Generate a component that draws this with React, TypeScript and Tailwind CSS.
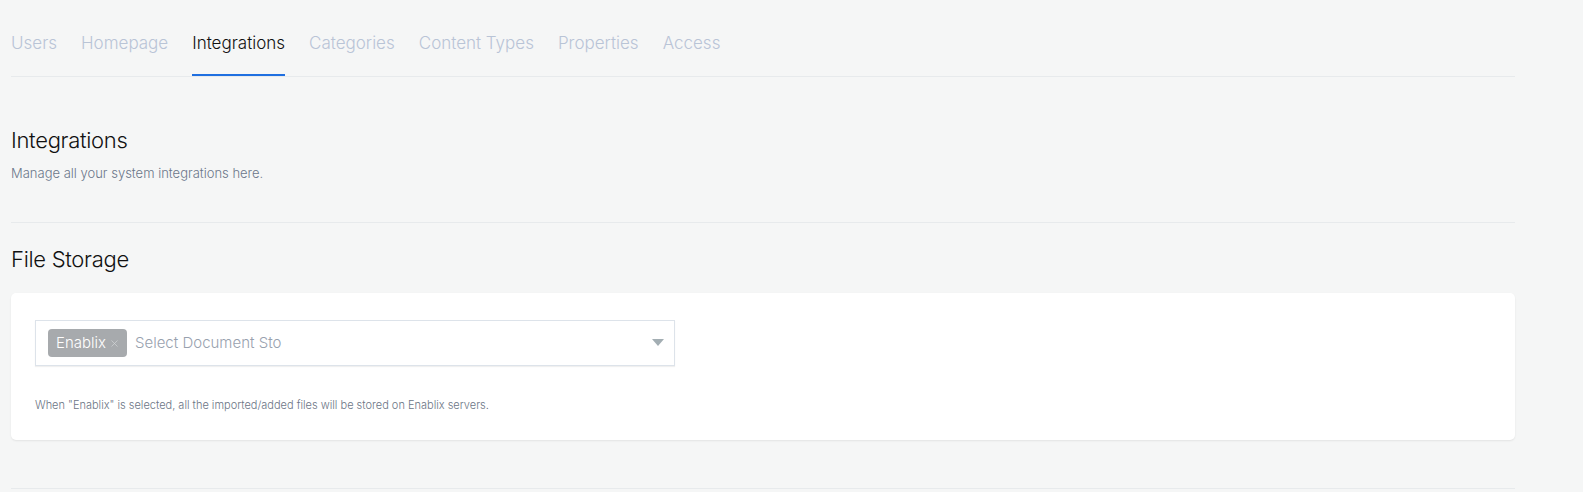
import { X } from "lucide-react";

const tabs = [
  "Users",
  "Homepage",
  "Integrations",
  "Categories",
  "Content Types",
  "Properties",
  "Access",
];

export default function App() {
  return (
    <div
      className="min-h-[492px] bg-[#f5f6f6] pl-[11px] font-['Inter',sans-serif]"
    >
      <div className="w-[1504px]">
        <nav className="flex gap-6 border-b border-[#e7eaec] pt-[31px]">
          {tabs.map((t) => (
            <div
              key={t}
              className={
                t === "Integrations"
                  ? "border-b-2 border-[#1f6fe0] pb-[19px] text-[17px] font-light leading-[24px] text-[#111]"
                  : "border-b-2 border-transparent pb-[19px] text-[17px] font-light leading-[24px] text-[#b9c4d6]"
              }
            >
              {t}
            </div>
          ))}
        </nav>

        <div className="border-b border-[#e7eaec] pb-[40px] pt-[49px]">
          <h1 className="text-[22px] font-light leading-[28px] tracking-[-0.3px] text-[#111]">
            Integrations
          </h1>
          <p className="mt-[10px] text-[13px] font-light leading-[18px] text-[#6b778a]">
            Manage all your system integrations here.
          </p>
        </div>

        <h2 className="pt-[22px] text-[22px] font-light leading-[28px] tracking-[-0.3px] text-[#111]">
          File Storage
        </h2>

        <div className="mt-[20px] rounded-[5px] bg-white px-[24px] pb-[27px] pt-[27px] shadow-[0_1px_2px_rgba(0,0,0,0.08)]">
          <div className="flex h-[46px] w-[640px] items-center border border-[#dde3ea] pl-[12px] pr-[10px] shadow-[0_1px_1px_rgba(0,0,0,0.06)]">
            <span className="flex h-[28px] items-center gap-[3px] rounded-[4px] bg-[#a7aaad] pl-[8px] pr-[7px] text-[15px] font-light text-white">
              Enablix
              <X className="h-[11px] w-[11px] text-[#d4d6d8]" strokeWidth={1.5} />
            </span>
            <span className="ml-[8px] flex-1 text-[15px] font-light text-[#98a1ae]">
              Select Document Sto
            </span>
            <svg width="12" height="8" viewBox="0 0 12 8">
              <path d="M0 0 H12 L6 7 Z" fill="#a3aeb3" />
            </svg>
          </div>
          <p className="mt-[31px] text-[11px] font-light leading-[16px] text-[#6b7585]">
            When "Enablix" is selected, all the imported/added files will be stored on Enablix servers.
          </p>
        </div>

        <div className="mt-[48px] border-b border-[#e7eaec]" />
      </div>
    </div>
  );
}
